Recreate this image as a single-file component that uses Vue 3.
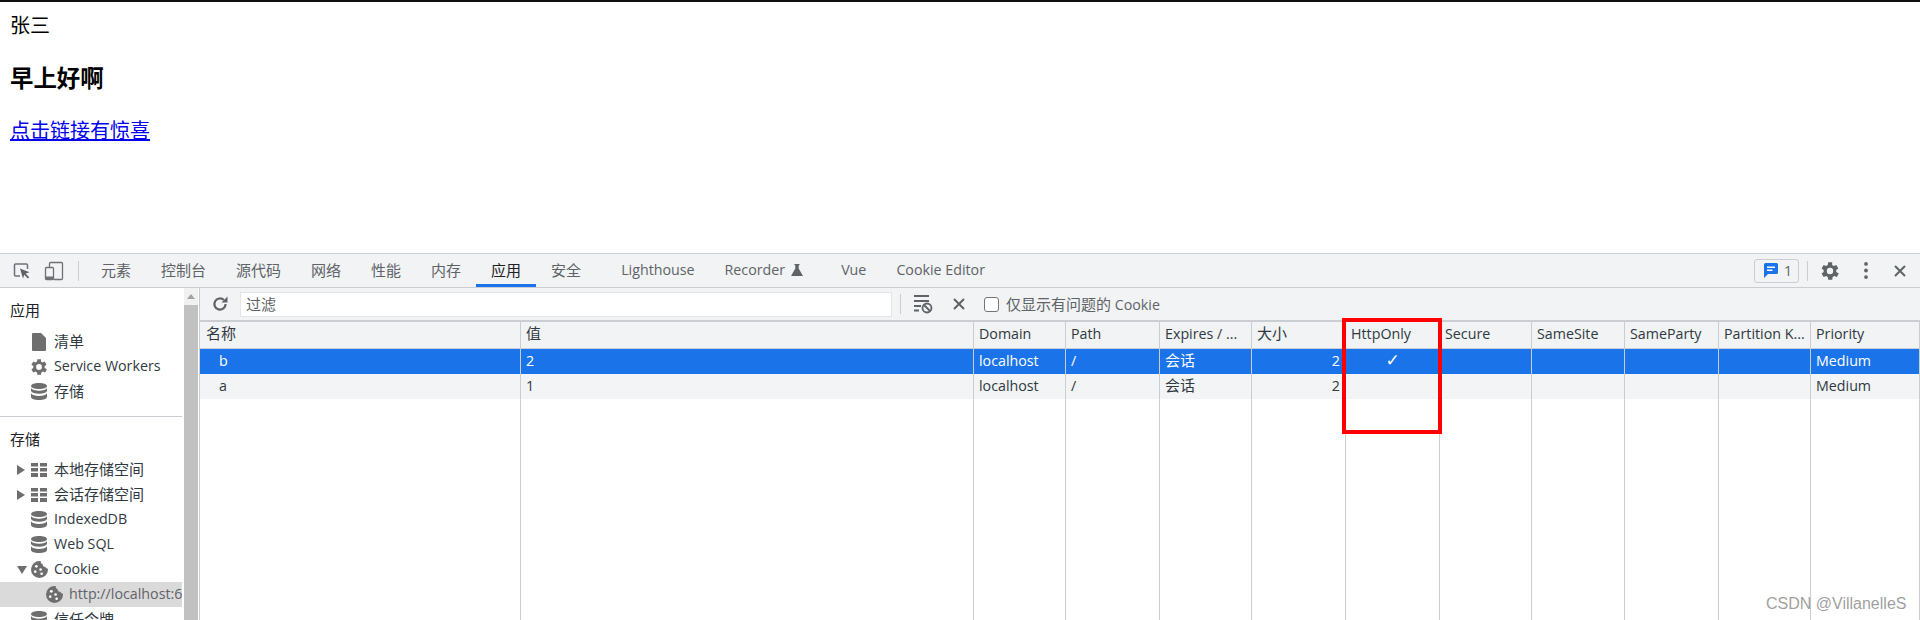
<script setup>
const cjk = (s) => /[\u4e00-\u9fff]/.test(s)
const tabs = [
  { label: '元素' }, { label: '控制台' }, { label: '源代码' }, { label: '网络' }, { label: '性能' },
  { label: '内存' }, { label: '应用', active: true }, { label: '安全', cls: 'wide' },
  { label: 'Lighthouse' }, { label: 'Recorder', flask: true }, { label: 'Vue' }, { label: 'Cookie Editor' }
]
const headers = ['名称', '值', 'Domain', 'Path', 'Expires / ...', '大小', 'HttpOnly', 'Secure', 'SameSite', 'SameParty', 'Partition K...', 'Priority']
const rows = [
  { cls: 'selected', cells: ['b', '2', 'localhost', '/', '会话', '2', '✓', '', '', '', '', 'Medium'] },
  { cls: 'alt', cells: ['a', '1', 'localhost', '/', '会话', '2', '', '', '', '', '', 'Medium'] },
  { cls: 'filler', cells: ['', '', '', '', '', '', '', '', '', '', '', ''] }
]
const appItems = [
  { icon: 'file', label: '清单' },
  { icon: 'gear', label: 'Service Workers' },
  { icon: 'db', label: '存储' }
]
const storeItems = [
  { arrow: 'right', icon: 'grid', label: '本地存储空间' },
  { arrow: 'right', icon: 'grid', label: '会话存储空间' },
  { icon: 'db', label: 'IndexedDB' },
  { icon: 'db', label: 'Web SQL' },
  { arrow: 'down', icon: 'cookie', label: 'Cookie' },
  { icon: 'cookie', label: 'http://localhost:6', cls: 'child' },
  { icon: 'db', label: '信任令牌' }
]
const gearPath = 'M19.4 13a7.5 7.5 0 0 0 0-2l2.1-1.6-2-3.4-2.5 1a7.5 7.5 0 0 0-1.7-1L15.4 3.3h-4l-.4 2.7a7.5 7.5 0 0 0-1.7 1l-2.5-1-2 3.4L6.900 11a7.500 7.500 0 0 0 0 2l-2.100 1.600 2 3.400 2.500-1a7.500 7.500 0 0 0 1.700 1l.4 2.700h4l.4-2.700a7.500 7.500 0 0 0 1.700-1l2.500 1 2-3.400zM13.200 15.200a3.200 3.200 0 1 1 0-6.400 3.200 3.200 0 0 1 0 6.400z'
const dbTop = 'M8 0c4.400 0 8 1.300 8 3s-3.600 3-8 3-8-1.300-8-3 3.600-3 8-3z'
const dbBands = 'M0 5c1 2 4 2.700 8 2.700s7-.7 8-2.700v3c-1 2-4 2.700-8 2.700S1 10 0 8zM0 10.200c1 2 4 2.700 8 2.700s7-.7 8-2.700V14c0 1.700-3.600 3-8 3s-8-1.300-8-3z'
</script>

<template>
  <div class="root">
    <section class="page">
      <div class="name">张三</div>
      <h3 class="greet">早上好啊</h3>
      <a class="link" href="#">点击链接有惊喜</a>
    </section>

    <section class="devtools">
      <header class="topbar">
        <div class="tool-icons">
          <svg class="ti" viewBox="0 0 20 20" width="20" height="20">
            <path d="M8 15H3.500a1 1 0 0 1-1-1V4a1 1 0 0 1 1-1h11a1 1 0 0 1 1 1v4" fill="none" stroke="#6e7175" stroke-width="1.500"/>
            <path d="M8 7.500l9.500 3.700-3.900 1.300 3.600 3.700-1.300 1.300-3.600-3.700-1.300 3.700z" fill="#5f6368"/>
          </svg>
          <svg class="ti" viewBox="0 0 20 20" width="20" height="20">
            <path d="M5.500 6.500V2.500a1 1 0 0 1 1-1h11a1 1 0 0 1 1 1v15a1 1 0 0 1-1 1H10" fill="none" stroke="#6e7175" stroke-width="1.300"/>
            <rect x="1.500" y="6.500" width="8" height="12" rx="1" fill="none" stroke="#6e7175" stroke-width="1.300"/>
            <rect x="1.500" y="15.500" width="8" height="3" fill="#6e7175"/>
          </svg>
        </div>
        <span class="vsep"></span>
        <nav class="tabs">
          <div v-for="t in tabs" :key="t.label" class="tab" :class="[{ active: t.active, cjk: cjk(t.label) }, t.cls]">
            {{ t.label }}
            <svg v-if="t.flask" class="flask" viewBox="0 0 12 12" width="12" height="12">
              <path d="M3.500 0h5v1.200H7.700v3.300L12 12H0l4.300-7.500V1.200H3.500z" fill="#5f6368"/>
            </svg>
          </div>
        </nav>
        <div class="right-tools">
          <div class="badge">
            <svg viewBox="0 0 14 15" width="14" height="15">
              <path d="M1.500 0h11A1.500 1.500 0 0 1 14 1.500v8A1.500 1.500 0 0 1 12.500 11H4l-4 4V1.500A1.500 1.500 0 0 1 1.500 0z" fill="#1a73e8"/>
              <rect x="3" y="3.500" width="8" height="1.500" fill="#fff"/>
              <rect x="3" y="6.500" width="5.500" height="1.500" fill="#fff"/>
            </svg>
            <span>1</span>
          </div>
          <span class="vsep tall"></span>
          <svg class="gear" viewBox="3.200 2 20 20" width="20" height="20"><path :d="gearPath" fill="#5f6368" fill-rule="evenodd"/></svg>
          <svg class="dots" viewBox="0 0 4 18" width="4" height="17">
            <circle cx="2" cy="2" r="2" fill="#5f6368"/><circle cx="2" cy="9" r="2" fill="#5f6368"/><circle cx="2" cy="16" r="2" fill="#5f6368"/>
          </svg>
          <svg class="close" viewBox="0 0 12 12" width="12" height="12">
            <path d="M1 1l10 10M11 1L1 11" stroke="#5f6368" stroke-width="2"/>
          </svg>
        </div>
      </header>

      <div class="body">
        <aside class="sidebar">
          <div class="tree">
            <div class="heading first cjk">应用</div>
            <div v-for="item in appItems" :key="item.label" class="item">
              <span class="arrow"></span>
              <span class="icon">
                <svg v-if="item.icon === 'file'" viewBox="0 0 14 18" width="14" height="18"><path d="M1 0h8l5 5v12a1 1 0 0 1-1 1H1a1 1 0 0 1-1-1V1a1 1 0 0 1 1-1z" fill="#6e6e6e"/></svg>
                <svg v-else-if="item.icon === 'gear'" viewBox="3.200 2 20 20" width="20" height="20"><path :d="gearPath" fill="#6e6e6e" fill-rule="evenodd"/></svg>
                <svg v-else viewBox="0 0 16 17" width="16" height="17">
                  <path :d="dbTop" fill="#6e6e6e"/><path :d="dbBands" fill="#6e6e6e"/>
                </svg>
              </span>
              <span class="label" :class="{ cjk: cjk(item.label) }">{{ item.label }}</span>
            </div>
            <div class="divider"></div>
            <div class="heading cjk">存储</div>
            <div v-for="item in storeItems" :key="item.label" class="item" :class="item.cls">
              <span class="arrow">
                <svg v-if="item.arrow === 'right'" viewBox="0 0 8 10" width="8" height="10"><path d="M0 0l8 5-8 5z" fill="#6e6e6e"/></svg>
                <svg v-else-if="item.arrow === 'down'" viewBox="0 0 10 8" width="10" height="8"><path d="M0 0h10l-5 8z" fill="#6e6e6e"/></svg>
              </span>
              <span class="icon">
                <svg v-if="item.icon === 'grid'" viewBox="0 0 16 14" width="16" height="14">
                  <path d="M0 0h7v3.500H0zM9 0h7v3.500H9zM0 5h7v3.500H0zM9 5h7v3.500H9zM0 10h7v4H0zM9 10h7v4H9z" fill="#6e6e6e"/>
                </svg>
                <svg v-else-if="item.icon === 'cookie'" viewBox="0 0 16 16" width="17" height="17">
                  <path d="M8 0c.4 0 .8 0 1.200.1A2.500 2.500 0 0 0 11 3a2.500 2.500 0 0 0 2.500 2.500c.2 1 1.200 1.700 2.400 1.700L16 8A8 8 0 1 1 8 0z" fill="#6e6e6e"/>
                  <circle cx="5" cy="5" r="1.300" fill="#fff"/><circle cx="4" cy="10" r="1.200" fill="#fff"/><circle cx="9" cy="8" r="1.200" fill="#fff"/><circle cx="10" cy="12" r="1.200" fill="#fff"/>
                </svg>
                <svg v-else viewBox="0 0 16 17" width="16" height="17">
                  <path :d="dbTop" fill="#6e6e6e"/><path :d="dbBands" fill="#6e6e6e"/>
                </svg>
              </span>
              <span class="label" :class="{ cjk: cjk(item.label) }">{{ item.label }}</span>
            </div>
          </div>
          <div class="scrollbar">
            <span class="up"></span>
            <span class="thumb"></span>
          </div>
        </aside>

        <main class="main">
          <div class="filterbar">
            <svg class="refresh" viewBox="0 0 16 16" width="16" height="16">
              <path d="M13.600 8A5.600 5.600 0 1 1 11.900 4" fill="none" stroke="#5f6368" stroke-width="2.200"/>
              <path d="M9.500 6.500h6V.5z" fill="#5f6368"/>
            </svg>
            <div class="filter cjk">过滤</div>
            <span class="vsep short"></span>
            <svg class="clear" viewBox="0 0 20 20" width="20" height="20">
              <path d="M1 1h15v2H1zM1 6h15v2H1zM1 11h7v2H1zM1 15.500h5v2H1z" fill="#5f6368"/>
              <circle cx="14" cy="14" r="4.500" fill="none" stroke="#5f6368" stroke-width="1.800"/>
              <path d="M11 11l6 6" stroke="#5f6368" stroke-width="1.800"/>
            </svg>
            <svg class="xicon" viewBox="0 0 12 12" width="12" height="12">
              <path d="M1 1l10 10M11 1L1 11" stroke="#5f6368" stroke-width="2"/>
            </svg>
            <span class="checkbox"></span>
            <span class="check-label"><span class="cjk">仅显示有问题的</span> Cookie</span>
          </div>

          <div class="grid">
            <div v-for="(h, i) in headers" :key="h" class="cell head" :class="{ cjk: cjk(h), first: i === 0 }">{{ h }}</div>
            <template v-for="r in rows" :key="r.cls">
              <div
                v-for="(c, i) in r.cells"
                :key="i"
                class="cell"
                :class="[r.cls, { first: i === 0, num: i === 5, mark: i === 6, cjk: cjk(c) }]"
              >{{ c }}</div>
            </template>
          </div>
        </main>
      </div>
    </section>

    <div class="redbox"></div>
    <div class="watermark">CSDN @VillanelleS</div>
  </div>
</template>

<style>
html, body { margin: 0; padding: 0; background: #fff; overflow: hidden; }
</style>

<style scoped>
.root {
  position: relative;
  width: 1920px;
  height: 620px;
  overflow: hidden;
  display: flex;
  flex-direction: column;
  font-family: "Open Sans", "Noto Sans CJK SC", sans-serif;
  font-size: 14.250px;
  color: #303942;
}
.cjk { font-size: 15px; }
.page {
  flex: none;
  box-sizing: border-box;
  border-top: 2px solid #111;
  padding: 10px 10px 0;
  background: #fff;
  color: #000;
  font-family: "Noto Sans CJK SC", sans-serif;
  font-size: 20px;
  height: 253px;
}
.name { line-height: 26px; }
.greet { margin: 24px 0 22px; font-size: 23.400px; line-height: 31px; font-weight: 700; }
.link { display: inline-block; line-height: 26px; color: #00e; text-decoration: underline; }

.devtools { flex: 1; display: flex; flex-direction: column; min-height: 0; }
.topbar {
  height: 35px;
  flex: none;
  box-sizing: border-box;
  display: flex;
  align-items: center;
  background: #f1f3f4;
  border-top: 1px solid #cacdd1;
  border-bottom: 1px solid #cacdd1;
}
.tool-icons { display: flex; align-items: center; gap: 12px; padding-left: 12px; width: 78px; box-sizing: border-box; }
.ti { display: block; flex: none; }
.vsep { width: 1px; height: 20px; background: #cacdd1; flex: none; }
.tabs { display: flex; align-self: stretch; padding-left: 7px; }
.tab {
  display: flex;
  align-items: center;
  height: 33px;
  box-sizing: border-box;
  padding: 0 15px 2px;
  color: #5f6368;
  white-space: nowrap;
}
.tab.active { color: #202124; border-bottom: 3px solid #1a73e8; padding-top: 1px; padding-bottom: 0; }
.tab.wide { padding-right: 25px; }
.flask { margin-left: 6px; margin-right: 8px; }
.right-tools { margin-left: auto; display: flex; align-items: center; }
.badge {
  width: 45px;
  height: 24px;
  box-sizing: border-box;
  border: 1px solid #cacdd1;
  border-radius: 3px;
  display: flex;
  align-items: center;
  gap: 6px;
  padding-left: 9px;
  color: #5f6368;
}
.vsep.tall { margin-left: 8px; }
.gear { margin-left: 12px; }
.dots { margin-left: 24px; }
.close { margin-left: 26px; margin-right: 14px; }

.body { flex: 1; display: flex; min-height: 0; }
.sidebar { width: 200px; flex: none; display: flex; background: #fff; box-sizing: border-box; border-right: 1px solid #cacdd1; overflow: hidden; }
.tree { width: 182px; flex: none; overflow: hidden; padding-top: 11px; box-sizing: border-box; }
.heading { height: 25px; line-height: 23px; padding-left: 10px; margin-bottom: 4px; color: #202124; }
.heading.first { margin-bottom: 5px; }
.item { height: 25px; display: flex; align-items: center; padding-left: 16px; white-space: nowrap; color: #303942; }
.arrow { width: 14px; flex: none; display: flex; align-items: center; justify-content: flex-start; padding-left: 1px; box-sizing: border-box; }
.icon { width: 18px; flex: none; display: flex; align-items: center; justify-content: center; }
.label { margin-left: 6px; padding-bottom: 2px; }
.item.child { background: #dadada; padding-left: 31px; color: #5f6368; }
.divider { height: 1px; background: #cacdd1; margin: 12px 0 11px; }
.scrollbar { width: 14px; margin-left: 2px; flex: none; display: flex; flex-direction: column; align-items: center; background: #f1f1f1; }
.up { width: 0; height: 0; margin-top: 6px; border-left: 4px solid transparent; border-right: 4px solid transparent; border-bottom: 5px solid #a3a3a3; }
.thumb { width: 14px; flex: 1; margin-top: 6px; background: #c1c1c1; }

.main { flex: 1; min-width: 0; display: flex; flex-direction: column; }
.filterbar {
  height: 34px;
  flex: none;
  box-sizing: border-box;
  display: flex;
  align-items: center;
  background: #f1f3f4;
  border-bottom: 2px solid #cacdd1;
}
.refresh { margin-left: 12px; flex: none; }
.filter {
  width: 652px;
  height: 25px;
  box-sizing: border-box;
  margin-left: 12px;
  background: #fff;
  border: 1px solid #e3e5e8;
  padding-left: 5px;
  line-height: 22px;
  color: #5f6368;
  flex: none;
}
.vsep.short { margin-left: 8px; }
.clear { margin-left: 12px; flex: none; }
.xicon { margin-left: 20px; flex: none; }
.checkbox { width: 15px; height: 15px; box-sizing: border-box; margin-left: 19px; border: 1.500px solid #767676; border-radius: 3px; background: #fff; flex: none; }
.check-label { margin-left: 7px; padding-bottom: 2px; color: #5f6368; white-space: nowrap; }

.grid {
  flex: 1;
  min-height: 0;
  display: grid;
  grid-template-columns: 321px 453px 92px 94px 92px 94px 94px 92px 93px 94px 92px 109px;
  grid-template-rows: 27px 25px 25px 1fr;
  background: #fff;
}
.cell {
  box-sizing: border-box;
  border-right: 1px solid #cacdd1;
  padding: 0 5px;
  line-height: 23px;
  white-space: nowrap;
  overflow: hidden;
  color: #303942;
}
.cell.head { background: #f1f3f4; border-bottom: 1px solid #cacdd1; }
.cell.head.first { padding-left: 6px; }
.cell.selected { background: #1a73e8; color: #fff; }
.cell.alt { background: #f2f4f6; }
.cell.first:not(.filler):not(.head) { padding-left: 19px; }
.cell.num { text-align: right; }
.cell.mark { text-align: center; font-family: "DejaVu Sans", sans-serif; font-size: 17px; }

.redbox {
  position: absolute;
  left: 1342px;
  top: 318px;
  width: 100px;
  height: 116px;
  box-sizing: border-box;
  border: 4px solid #f00;
}
.watermark {
  position: absolute;
  left: 1766px;
  top: 595px;
  font-family: "Liberation Sans", sans-serif;
  font-size: 16px;
  line-height: 18px;
  color: rgba(90, 90, 90, 0.6);
  white-space: nowrap;
}
</style>
